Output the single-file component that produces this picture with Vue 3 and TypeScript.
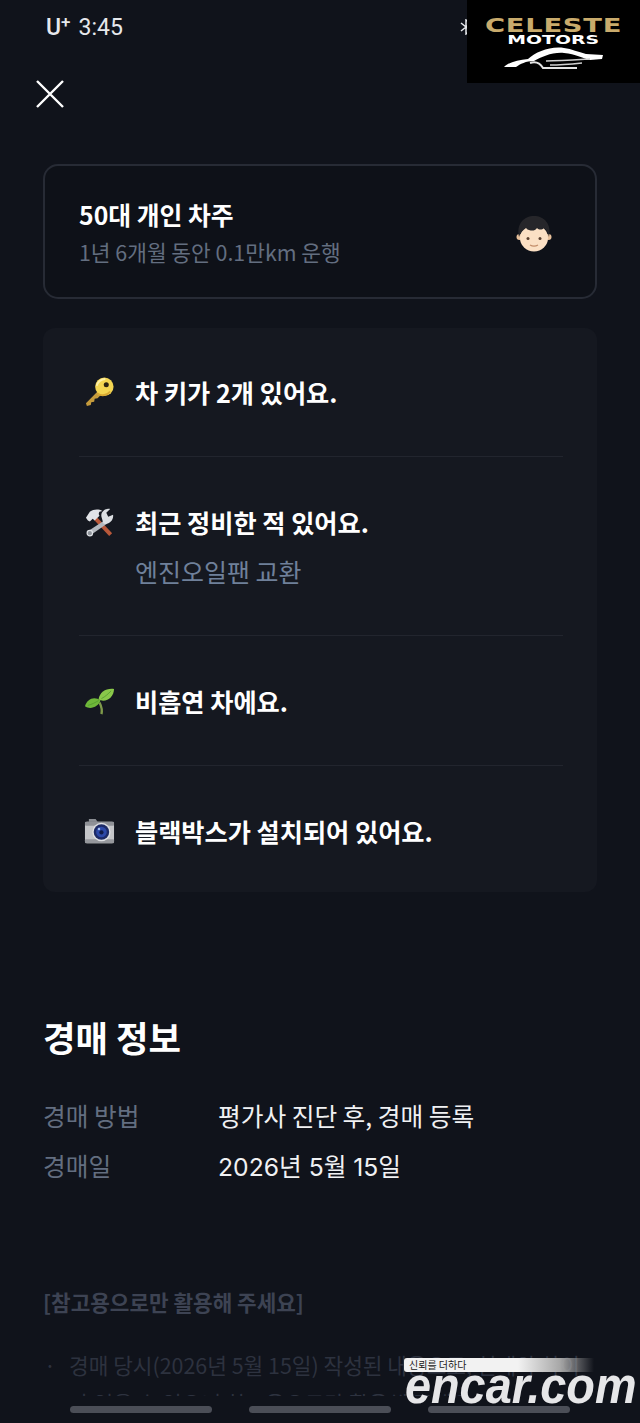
<script setup lang="ts">
interface Fact {
  icon: "key" | "tools" | "sprout" | "camera"
  title: string
  note?: string
}

const facts: Fact[] = [
  { icon: "key", title: "차 키가 2개 있어요." },
  { icon: "tools", title: "최근 정비한 적 있어요.", note: "엔진오일팬 교환" },
  { icon: "sprout", title: "비흡연 차에요." },
  { icon: "camera", title: "블랙박스가 설치되어 있어요." },
]

const auctionInfo = [
  { label: "경매 방법", value: "평가사 진단 후, 경매 등록" },
  { label: "경매일", value: "2026년 5월 15일" },
]
</script>

<template>
  <div class="screen">
    <header class="status-bar">
      <span class="carrier">U<sup>+</sup></span>
      <span class="clock">3:45</span>
      <svg class="bt" viewBox="0 0 14 16" width="14" height="16">
        <path d="M1 4 11 12 6 15V1l5 3L1 12" stroke="#e6e8ec" stroke-width="1.500" fill="none" />
      </svg>
    </header>

    <button class="close" type="button" aria-label="닫기">
      <svg viewBox="0 0 28 28" width="28" height="28">
        <path d="M1 1 27 27M27 1 1 27" stroke="#fff" stroke-width="2.4" fill="none" />
      </svg>
    </button>

    <section class="owner-card">
      <div>
        <h2>50대 개인 차주</h2>
        <p>1년 6개월 동안 0.1만km 운행</p>
      </div>
      <svg class="owner-face" viewBox="0 0 36 36" width="36" height="36">
        <circle cx="3.500" cy="21" r="3" fill="#e9c29c" />
        <circle cx="32.500" cy="21" r="3" fill="#e9c29c" />
        <ellipse cx="18" cy="22" rx="14" ry="13.500" fill="#fbe0c4" />
        <path d="M3 21C0 8 8 0 18 0s18 8 15 21c-1-4-2-7-5-9-2 2-5 2-7 0-2 3-5 3-8 2-1 0-2-1-3-2-3 2-6 5-7 9Z" fill="#26262a" />
        <circle cx="12" cy="22.500" r="1.500" fill="#5a4030" />
        <circle cx="24" cy="22.500" r="1.500" fill="#5a4030" />
        <path d="M14 29c2.500 1.500 5.500 1.500 8 0" stroke="#c48f6c" stroke-width="1.200" fill="none" />
      </svg>
    </section>

    <section class="facts">
      <div v-for="fact in facts" :key="fact.title" class="fact">
        <div class="fact-title">
          <svg class="fact-icon" viewBox="0 0 32 32" width="32" height="32">
            <g v-if="fact.icon === 'key'">
              <path d="M16 13 2 27l1 3 4-1 .500-3 3-.500.500-3 3-.500 6-6Z" fill="#c49a3c" />
              <circle cx="21" cy="10" r="9.500" fill="#f3d552" />
              <path d="M13 9c1-4 5-7 9-7" stroke="#fdf0a8" stroke-width="2" fill="none" />
              <path d="M14 17c4 3 10 2 13-2" stroke="#d8a832" stroke-width="2" fill="none" />
              <circle cx="23" cy="8" r="2.600" fill="#2a2212" />
            </g>
            <g v-else-if="fact.icon === 'tools'">
              <path d="M13 10 29 27l-3 3L10 13Z" fill="#b9583a" />
              <path d="M4 14 2 11 6 5c4-3 9-3 13-1l-3 1c-1 1-1 3 0 4l-5 5-2-2-3 3Z" fill="#e2e4e8" />
              <path d="M21 14 4 25l3 4 17-12Z" fill="#b4b8be" />
              <path d="M18 10c-1-5 4-9 9-8l-4 4 2 4 5-2c1 6-5 11-10 9Z" fill="#dcdfe3" />
              <circle cx="6" cy="27" r="2.800" fill="#8f949b" stroke="#dfe2e6" stroke-width="1.200" />
            </g>
            <g v-else-if="fact.icon === 'sprout'">
              <path d="M16 17c2 4 3 8 2 12" stroke="#7f9a4a" stroke-width="2.400" fill="none" />
              <path d="M1 21c2-8 10-11 16-6-2 6-10 10-16 6Z" fill="#6fb83a" />
              <path d="M15 14c1-8 8-12 16-11 0 8-8 15-16 11Z" fill="#8ac84a" />
              <path d="M4 20c4-1 8-3 11-5M18 13c4-2 7-5 10-8" stroke="#4f9a2c" stroke-width=".8" fill="none" />
            </g>
            <g v-else>
              <path d="M5 3h7l2 3H5Z" fill="#8a8d93" />
              <rect x="1" y="6" width="30" height="22" rx="2" fill="#c4c5c8" />
              <rect x="1" y="6" width="30" height="4" rx="1" fill="#8f9197" />
              <rect x="1" y="24" width="30" height="4" rx="1" fill="#96989d" />
              <circle cx="18" cy="16.500" r="9.500" fill="#dfe0e3" />
              <circle cx="18" cy="16.500" r="8" fill="#1d2a66" />
              <circle cx="18" cy="16.500" r="5.500" fill="#2c48a8" />
              <circle cx="18" cy="17" r="2.200" fill="#101a48" />
              <circle cx="15.500" cy="13.500" r="1.300" fill="#9fbcf0" />
            </g>
          </svg>
          <span>{{ fact.title }}</span>
        </div>
        <p v-if="fact.note" class="fact-note">{{ fact.note }}</p>
      </div>
    </section>

    <section class="auction">
      <h2>경매 정보</h2>
      <dl>
        <div v-for="row in auctionInfo" :key="row.label" class="auction-row">
          <dt>{{ row.label }}</dt>
          <dd>{{ row.value }}</dd>
        </div>
      </dl>
    </section>

    <section class="notice">
      <h3>[참고용으로만 활용해 주세요]</h3>
      <ul>
        <li>경매 당시(2026년 5월 15일) 작성된 내용으로, 현재와 차이가 있을 수 있으니 참고용으로만 활용해 주세요.</li>
      </ul>
    </section>

    <!-- things lying over the page -->
    <div class="bottom-nav">
      <span /><span /><span />
    </div>

    <div class="celeste">
      <div class="celeste-name">CELESTE</div>
      <div class="celeste-sub">MOTORS</div>
      <svg viewBox="0 0 100 24" width="100" height="24">
        <path d="M0 21C5 16 14 14 24 13 32 6 46 0 60 2c8 1 14 4 22 6l17 1-1 4-12 1c-8-2-14-6-26-7C48 6 38 11 30 15c-8 0-14 3-18 6Z" fill="#fff" />
        <path d="M26 17c6-2 10 0 13 5h34" stroke="#e4e4e4" stroke-width="2" fill="none" />
        <path d="M42 15c14 0 28-1 44-2M46 19c12 0 22-1 32-2" stroke="#cfcfcf" stroke-width="1.500" fill="none" />
      </svg>
    </div>

    <div class="encar">
      <div class="encar-tag">신뢰를 더하다</div>
      <div class="encar-name">encar.com</div>
    </div>
  </div>
</template>

<style>
html,
body {
  margin: 0;
  background: #10131b;
}
</style>

<style scoped>
.screen {
  position: relative;
  box-sizing: border-box;
  width: 640px;
  height: 1423px;
  overflow: hidden;
  padding: 0 43px;
  background: #10131b;
  color: #fff;
  font-family: "Noto Sans CJK KR", "Noto Sans", sans-serif;
}
.status-bar {
  display: flex;
  align-items: center;
  gap: 8px;
  height: 54px;
  padding: 0 123px 0 3px;
  color: #e6e8ec;
  font-family: Roboto, sans-serif;
  font-size: 23px;
}
.carrier {
  font-weight: 500;
}
.carrier sup {
  font-size: 17px;
  line-height: 0;
  vertical-align: 7px;
}
.clock {
  font-weight: 400;
}
.bt {
  margin-left: auto;
}
.close {
  display: block;
  width: 28px;
  height: 28px;
  margin: 26px 0 0 -7px;
  padding: 0;
  border: 0;
  background: none;
}
.owner-card {
  box-sizing: border-box;
  display: flex;
  align-items: center;
  justify-content: space-between;
  height: 135px;
  margin-top: 56px;
  padding: 0 43px 0 34px;
  border: 2px solid #272b35;
  border-radius: 15px;
  background: #0e1118;
}
.owner-card h2 {
  margin: 0 0 4px;
  font-size: 24.8px;
  font-weight: 700;
  line-height: 36px;
}
.owner-card p {
  margin: 0;
  color: #636e80;
  font-size: 21.4px;
  line-height: 32px;
}
.owner-face {
  margin-top: 4px;
}
.facts {
  box-sizing: border-box;
  height: 564px;
  margin-top: 29px;
  padding: 0 34px 0 36px;
  border-radius: 12px;
  background: #151820;
}
.fact {
  padding: 48px 0 47px;
  border-bottom: 1px solid #22252e;
}
.fact:first-child {
  padding-top: 47px;
}
.fact:last-child {
  border-bottom: 0;
}
.fact-title {
  display: flex;
  align-items: center;
  gap: 20px;
  height: 34px;
  font-size: 25.2px;
  font-weight: 700;
}
.fact-icon {
  flex: none;
  margin-left: 5px;
  width: 31px;
  height: 31px;
}
.fact-note {
  margin: 15px 0 0 56px;
  color: #6f809a;
  font-size: 25px;
  line-height: 34px;
}
.auction {
  margin-top: 119px;
}
.auction h2 {
  margin: 0;
  font-size: 35.3px;
  font-weight: 700;
  line-height: 52px;
}
.auction dl {
  margin: 27px 0 0;
}
.auction-row {
  display: flex;
  align-items: center;
  height: 50px;
  font-size: 24.7px;
}
.auction-row dt {
  width: 175px;
  color: #636e80;
}
.auction-row dd {
  margin: 0;
  color: #f0f1f3;
}
.auction-row:last-child dd {
  font-family: Inter, "Noto Sans CJK KR", sans-serif;
}
.notice {
  margin-top: 96px;
}
.notice h3 {
  margin: 0;
  color: #3d4353;
  font-size: 21.3px;
  font-weight: 700;
  line-height: 32px;
}
.notice ul {
  margin: 28px 0 0;
  padding: 0;
  list-style: none;
}
.notice li {
  position: relative;
  padding-left: 26px;
  color: #2d323f;
  font-size: 21.4px;
  line-height: 38px;
}
.notice li::before {
  content: "·";
  position: absolute;
  left: 1px;
}
.bottom-nav {
  position: absolute;
  left: 70px;
  bottom: 0;
  display: flex;
  gap: 37px;
  width: 570px;
  height: 27px;
  padding-top: 10px;
  box-sizing: border-box;
  background: #10131b;
}
.bottom-nav span {
  width: 142px;
  height: 7px;
  border-radius: 4px;
  background: #4b4e57;
}
.celeste {
  position: absolute;
  top: 0;
  right: 0;
  box-sizing: border-box;
  display: flex;
  flex-direction: column;
  align-items: center;
  width: 173px;
  height: 83px;
  padding-top: 15px;
  background: #000;
}
.celeste-name {
  color: #c9ab6c;
  font-family: "DejaVu Sans", sans-serif;
  font-size: 19px;
  font-weight: 700;
  line-height: 20px;
  letter-spacing: 0.5px;
  transform: scaleX(1.44);
}
.celeste-sub {
  color: #fff;
  font-family: "DejaVu Sans", sans-serif;
  font-size: 12px;
  font-weight: 700;
  line-height: 11px;
  transform: scaleX(1.57);
}
.encar {
  position: absolute;
  left: 404px;
  top: 1358px;
  width: 236px;
}
.encar-tag {
  box-sizing: border-box;
  width: 190px;
  height: 14px;
  padding-left: 5px;
  border-radius: 3px 0 0 3px;
  background: linear-gradient(90deg, #f2f2f2 0 60%, #a8a8a8 82%, rgba(160, 160, 160, 0));
  color: #222;
  font-size: 10px;
  line-height: 14px;
}
.encar-name {
  margin-top: -8px;
  margin-left: 1px;
  color: #e6e6e8;
  font-family: "Liberation Sans", sans-serif;
  font-size: 52px;
  font-style: italic;
  font-weight: 700;
  line-height: 42px;
  white-space: nowrap;
  transform: scaleX(0.9);
  transform-origin: left center;
}
</style>
